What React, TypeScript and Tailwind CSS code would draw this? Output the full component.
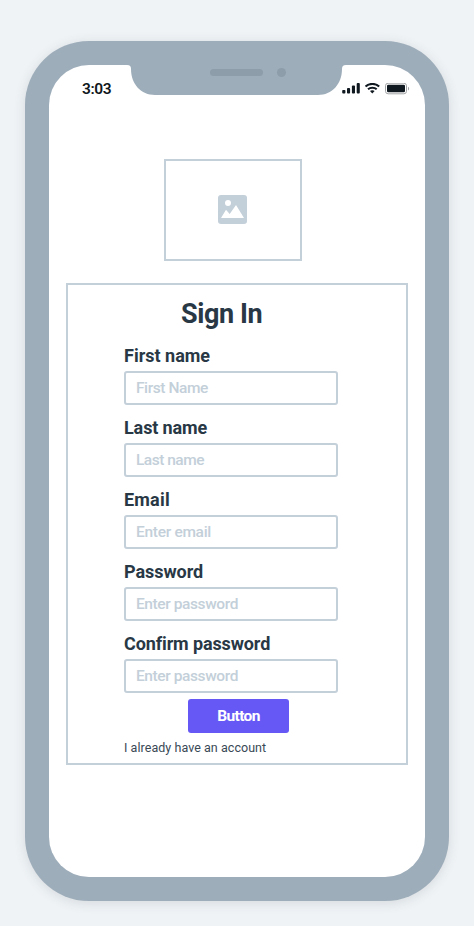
type FieldProps = {
  label: string;
  labelClass: string;
  placeholder: string;
  inputClass: string;
};

const fields: FieldProps[] = [
  { label: "First name", labelClass: "tracking-[0px]", placeholder: "First Name", inputClass: "tracking-[-0.42px]" },
  { label: "Last name", labelClass: "tracking-[-0.12px]", placeholder: "Last name", inputClass: "tracking-[-0.5px]" },
  { label: "Email", labelClass: "tracking-[0.2px]", placeholder: "Enter email", inputClass: "tracking-[-0.3px]" },
  { label: "Password", labelClass: "tracking-[-0.05px]", placeholder: "Enter password", inputClass: "tracking-[-0.4px]" },
  { label: "Confirm password", labelClass: "tracking-[-0.12px]", placeholder: "Enter password", inputClass: "tracking-[-0.4px]" },
];

function Field({ label, labelClass, placeholder, inputClass }: FieldProps) {
  return (
    <label className="flex w-[214px] flex-col gap-[3px]">
      <span className={`h-6 whitespace-nowrap text-[18px] leading-6 font-bold text-[#293845] ${labelClass}`}>{label}</span>
      <input
        type="text"
        placeholder={placeholder}
        className={`h-[34px] w-full rounded-[3px] border-2 border-[#c3cfd9] bg-white px-[10px] text-[15.5px] font-medium placeholder:text-[#c3cfd9] ${inputClass}`}
      />
    </label>
  );
}

function Notch() {
  return (
    <div className="absolute top-0 left-[78px] h-[30px] w-[219px]">
      <svg width="219" height="30" viewBox="0 0 219 30" fill="none">
        <path d="M0 0C3 0 4 1.2 4 4C4 19 14 30 28 30H191C205 30 215 19 215 4C215 1.2 216 0 219 0Z" fill="#9eadba" />
        <rect x="83" y="4" width="53" height="7" rx="3.5" fill="#8d9daa" />
        <circle cx="154.5" cy="7.5" r="4.5" fill="#8d9daa" />
      </svg>
    </div>
  );
}

function StatusIcons() {
  return (
    <svg width="68" height="12" viewBox="0 0 68 12" fill="none">
      <g fill="#101820">
        <rect x="0.2" y="6.9" width="3.2" height="3.6" rx="0.9" />
        <rect x="5" y="5" width="3.1" height="5.5" rx="0.9" />
        <rect x="9.9" y="2.5" width="3.1" height="8" rx="0.9" />
        <rect x="14.7" y="0" width="3.1" height="10.5" rx="0.9" />
        <path d="M28 8C29.1 7.1 31.5 7.1 32.6 8L30.3 10.4Z" />
      </g>
      <path d="M23.5 3.5C27.2 0 33.5 0 37.2 3.5M26 6.3C28.3 4.1 32.4 4.1 34.7 6.3" stroke="#101820" strokeWidth="2" />
      <rect x="43.5" y="0.2" width="21" height="10.6" rx="2.6" stroke="#a1a4a6" />
      <rect x="45" y="1.7" width="18" height="7.6" rx="1.3" fill="#101820" />
      <path d="M66 3.7C67.5 4.3 67.5 6.9 66 7.5Z" fill="#a1a4a6" />
    </svg>
  );
}

export default function App() {
  return (
    <div className="flex h-[926px] w-[474px] items-start overflow-hidden bg-[#eff3f6] pt-[41px] pl-[25px] font-['Roboto','Liberation_Sans',sans-serif]">
      <div className="h-[860px] w-[424px] rounded-[64px] bg-[#9eadba] p-6 shadow-[0_2px_12px_rgba(60,70,80,0.14)]">
        <div className="relative flex h-full w-full flex-col overflow-hidden rounded-[40px] bg-white">
          <Notch />
          <div className="flex h-[46px] items-center justify-between pt-[1px] pr-[15px] pl-[33px]">
            <span className="text-[15.5px] leading-5 font-semibold tracking-[-0.4px] text-[#101820]">3:03</span>
            <StatusIcons />
          </div>
          <div className="mt-12 ml-[115px] flex h-[102px] w-[138px] items-start border-2 border-[#c3cfd9] pt-[34px] pl-[52px]">
            <svg width="29" height="29" viewBox="0 0 29 29">
              <rect width="29" height="29" rx="3" fill="#c3cfd9" />
              <circle cx="10" cy="8" r="3" fill="#fff" />
              <path d="M3 23L8 14.8L11.7 19L18 10L26 23Z" fill="#fff" />
            </svg>
          </div>
          <form className="mt-[22px] ml-[17px] flex h-[482px] w-[342px] flex-col border-2 border-[#c3cfd9] pt-[13px] pl-14">
            <h1 className="ml-[57px] h-8 text-[27px] leading-8 font-bold tracking-[-0.4px] text-[#293845]">Sign In</h1>
            <div className="mt-[14px] flex flex-col gap-[11px]">
              {fields.map((field) => (
                <Field key={field.label} {...field} />
              ))}
            </div>
            <button type="button" className="mt-[6px] ml-16 h-[34px] w-[101px] rounded-[3px] bg-[#6658f5] pt-[2px] text-[15.5px] font-bold tracking-[-0.6px] text-white">
              Button
            </button>
            <a className="mt-[5px] h-5 whitespace-nowrap text-[12.5px] leading-5 tracking-[0.05px] text-[#394956]">I already have an account</a>
          </form>
        </div>
      </div>
    </div>
  );
}
